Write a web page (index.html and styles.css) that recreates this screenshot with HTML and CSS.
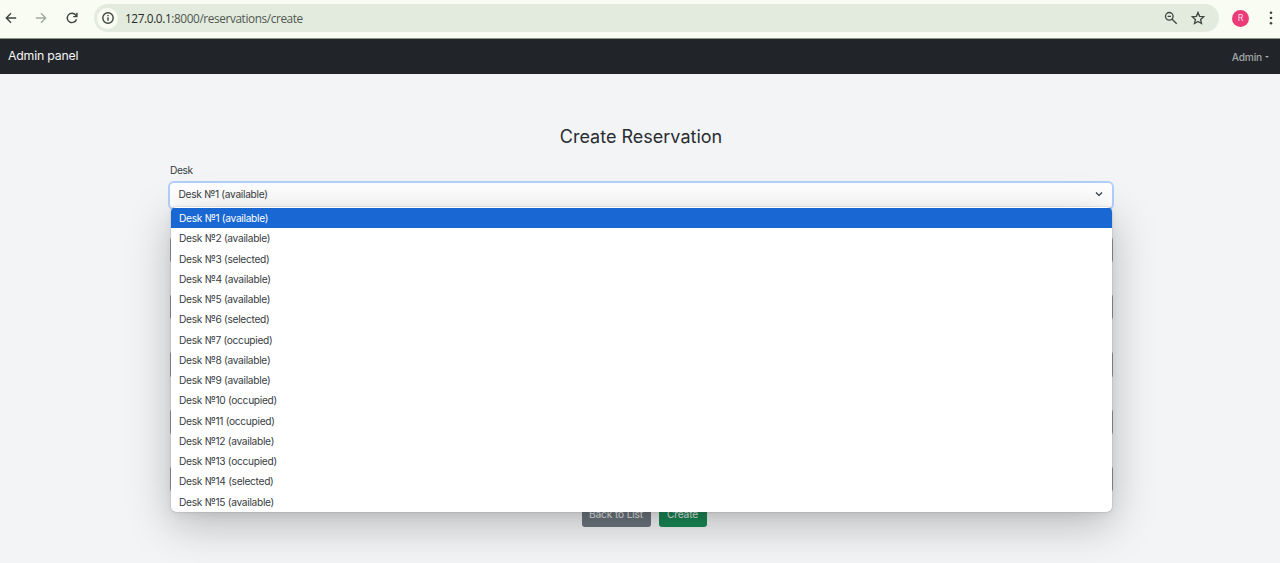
FILE: index.html
```html
<!DOCTYPE html>
<html lang="en">
<head>
<meta charset="utf-8">
<title>Create Reservation</title>
<link rel="stylesheet" href="styles.css">
</head>
<body>
<header class="toolbar">
  <svg class="nav-icon" viewBox="0 0 16 16"><path d="M13.2 8H3.4M8 3.3 3.3 8 8 12.7"/></svg>
  <svg class="nav-icon muted" viewBox="0 0 16 16"><path d="M2.8 8h9.8M8 3.3 12.7 8 8 12.7"/></svg>
  <svg class="nav-icon reload" viewBox="0 0 16 16"><path d="M12.5 9.2A4.7 4.7 0 1 1 11.7 5l1 1.2M12.9 2.8v3.8H9.2"/></svg>
  <div class="address">
    <span class="site-info"><svg viewBox="0 0 16 16"><circle cx="8" cy="8" r="5.2"/><path d="M8 7.3v3.5M8 4.9v1.4"/></svg></span>
    <span class="url"><b>127.0.0.1</b>:8000/reservations/create</span>
    <svg class="tool zoom" viewBox="0 0 16 16"><circle cx="6.3" cy="6.3" r="3.8"/><path d="m9.2 9.2 4.5 4.5M4.6 6.3H8"/></svg>
    <svg class="tool" viewBox="0 0 16 16"><path d="m8 2.5 1.6 3.8 4.1.4-3.1 2.7.9 4.1L8 11.4l-3.5 2.1.9-4.1-3.1-2.7 4.1-.4z"/></svg>
  </div>
  <span class="avatar">R</span>
  <svg class="kebab" viewBox="0 0 4 16"><circle cx="2" cy="2.8" r="1.3"/><circle cx="2" cy="8" r="1.3"/><circle cx="2" cy="13.2" r="1.3"/></svg>
</header>
<nav class="navbar">
  <span class="brand">Admin panel</span>
  <span class="account">Admin<i class="caret"></i></span>
</nav>
<main class="page">
  <h1 class="title">Create Reservation</h1>
  <form class="form">
    <label class="label">Desk</label>
    <div class="select">
      <span class="value">Desk №1 (available)</span>
      <svg class="chevron" viewBox="0 0 10 10"><path d="m2 3.5 3 3 3-3"/></svg>
      <ul class="options">
        <li class="option active">Desk №1 (available)</li>
        <li class="option">Desk №2 (available)</li>
        <li class="option">Desk №3 (selected)</li>
        <li class="option">Desk №4 (available)</li>
        <li class="option">Desk №5 (available)</li>
        <li class="option">Desk №6 (selected)</li>
        <li class="option">Desk №7 (occupied)</li>
        <li class="option">Desk №8 (available)</li>
        <li class="option">Desk №9 (available)</li>
        <li class="option">Desk №10 (occupied)</li>
        <li class="option">Desk №11 (occupied)</li>
        <li class="option">Desk №12 (available)</li>
        <li class="option">Desk №13 (occupied)</li>
        <li class="option">Desk №14 (selected)</li>
        <li class="option">Desk №15 (available)</li>
      </ul>
    </div>
    <div class="fields">
      <div class="field"></div>
      <div class="field"></div>
      <div class="field"></div>
      <div class="field"></div>
      <div class="field"></div>
    </div>
    <div class="actions">
      <span class="btn back">Back to List</span>
      <span class="btn create">Create</span>
    </div>
  </form>
</main>
</body>
</html>
```
FILE: styles.css
```css
* { box-sizing: border-box; }
body {
  margin: 0;
  height: 563px;
  overflow: hidden;
  background: #f3f4f6;
  color: #383c42;
  font: 10.2px/16px Inter, sans-serif;
}
svg { fill: none; stroke: #3d473d; stroke-width: 1.4; flex: none; }
.toolbar {
  display: flex;
  align-items: center;
  height: 38px;
  padding: 0 7px 2px 3px;
  background: #f8fcf2;
}
.nav-icon { width: 16px; height: 16px; margin-right: 14px; }
.nav-icon.muted { margin-right: 15px; stroke: #a5aaa1; }
.nav-icon.reload { margin-right: 14px; }
.address {
  display: flex;
  align-items: center;
  width: 1125px;
  height: 28px;
  padding: 0 13px 0 3px;
  border-radius: 14px;
  background: #e3ebdf;
}
.site-info {
  display: grid;
  place-items: center;
  width: 21px;
  height: 21px;
  border-radius: 50%;
  background: #f8fcf2;
}
.site-info svg { width: 16px; height: 16px; }
.url {
  flex: 1;
  margin-left: 7px;
  color: #50584f;
  font: 11.8px/18px "Open Sans", sans-serif;
  letter-spacing: -0.39px;
}
.url b { color: #252c25; font-weight: 400; }
.tool { width: 16px; height: 16px; stroke-width: 1.3; }
.zoom { margin-right: 11px; }
.avatar {
  width: 17px;
  height: 17px;
  margin-left: 13px;
  border-radius: 50%;
  background: #ec3b79;
  color: #fbdce7;
  font: 9px/17px Roboto, sans-serif;
  text-align: center;
}
.kebab { width: 4px; height: 16px; margin-left: auto; fill: #3d473d; stroke: none; }
.navbar {
  display: flex;
  align-items: center;
  justify-content: space-between;
  height: 36px;
  padding: 0 11px 1px 8px;
  border-top: 1px solid #8c978c;
  background: #212529;
}
.brand { color: #f4f5f6; font-size: 12.3px; letter-spacing: -0.2px; }
.account { display: flex; align-items: center; gap: 3px; padding-top: 1px; color: #a3a5a8; font-size: 10.2px; font-weight: 500; letter-spacing: -0.2px; }
.caret { border: 2.5px solid transparent; border-top-color: #a3a5a8; border-bottom: 0; }
.page { padding-top: 50px; }
.title {
  margin: 0;
  padding-left: 2px;
  color: #292d32;
  font-size: 18px;
  font-weight: 400;
  line-height: 26px;
  text-align: center;
}
.form { width: 942px; margin: 12px 0 0 170px; }
.label { display: block; letter-spacing: -0.4px; }
.select {
  position: relative;
  display: flex;
  align-items: center;
  justify-content: space-between;
  height: 25px;
  margin-top: 5px;
  padding: 0 8.5px 3px;
  border-radius: 4px;
  background: #fff;
  box-shadow: 0 0 0 2px #b2cffb;
  letter-spacing: -0.3px;
}
.chevron { width: 10px; height: 10px; stroke: #343a40; stroke-width: 1.2; }
.options {
  position: absolute;
  z-index: 1;
  top: 24px;
  left: 1px;
  width: 940.5px;
  margin: 0;
  padding: 1px 0 0;
  border-radius: 5px;
  overflow: hidden;
  background: #fff;
  list-style: none;
  box-shadow: 0 0 1px #5d6269, 0 12px 44px rgba(0, 0, 0, .25), 0 3px 10px rgba(0, 0, 0, .06);
}
.option { height: 20.26px; padding: 0 8px; line-height: 20.9px; }
.option.active { background: #1967d2; color: #fff; }
.fields { display: grid; gap: 29px; width: 942.5px; margin-top: 28px; }
.field { height: 28.2px; border: 1px solid #92969b; border-radius: 4px; background: #fff; }
.actions { display: flex; justify-content: center; gap: 8px; margin-top: 8px; padding-left: 6px; }
.btn {
  height: 26px;
  border-radius: 3px;
  color: #e6e8ea;
  line-height: 27px;
  letter-spacing: -0.15px;
  text-align: center;
}
.back { width: 69px; background: #6c757d; }
.create { width: 48px; background: #198754; }
```
